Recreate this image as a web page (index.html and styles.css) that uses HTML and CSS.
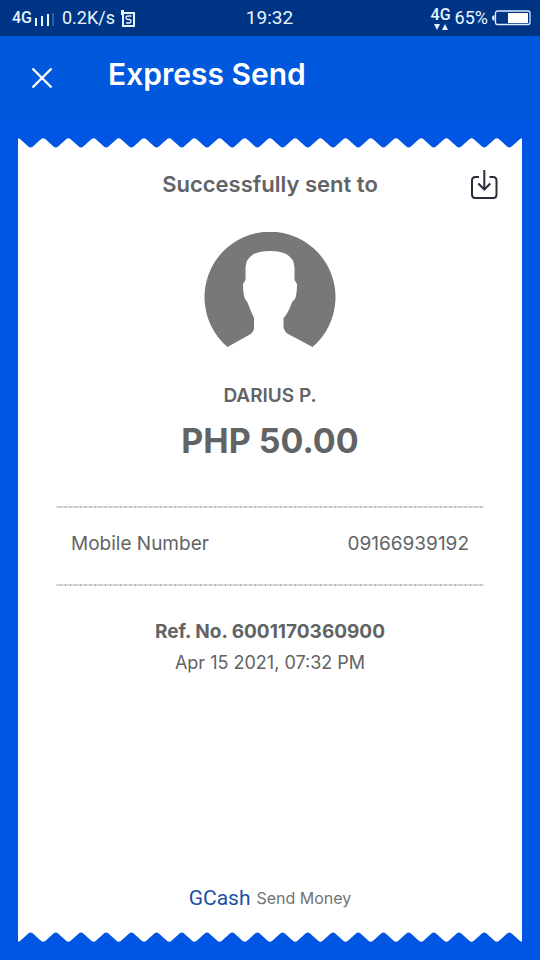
FILE: index.html
```
<!DOCTYPE html>
<html lang="en">
<head>
<meta charset="utf-8">
<meta name="viewport" content="width=device-width, initial-scale=1">
<title>Express Send</title>
<link rel="stylesheet" href="styles.css">
</head>
<body>
<div class="status">
  <div class="status-side">
    <span class="network">4G</span>
    <svg class="signal" width="20" height="16" viewBox="0 0 20 16" fill="#e8f6ff" aria-hidden="true"><path d="M1 8h2v8H1zM7 6h2v10H7zM13 4h2v12h-2z"/><path d="M18 3h2v13h-2z" fill="#2c5cae"/></svg>
    <span>0.2K/s</span>
    <svg width="16" height="18" viewBox="0 0 16 18" fill="none" stroke="#e8f6ff" stroke-width="2" aria-hidden="true"><path d="M2 4H13V17H2zM1 1V6M0 2H3"/><path d="M10.500 7H7Q5 7 5 8.700T7 10.500H8.500Q10 10.500 10 12.200T8.500 14H5" stroke-width="1.300"/></svg>
  </div>
  <time>19:32</time>
  <div class="status-side status-right">
    <div class="data">
      <span class="network">4G</span>
      <svg width="16" height="6" viewBox="0 0 16 6" fill="#e8f6ff" aria-hidden="true"><path d="M1 0h6l-3 6zM9 6h6l-3-6z"/></svg>
    </div>
    <span>65%</span>
    <svg width="39" height="16" viewBox="0 0 39 16" aria-hidden="true"><path d="M2.500 5Q0 5.500 0 8t2.500 3z" fill="#e8f6ff"/><rect x="3.500" y="1" width="34.500" height="13.500" rx="2" fill="none" stroke="#d9ebff" stroke-width="1.300"/><path d="M16 3h20v10H16z" fill="#fff"/></svg>
  </div>
</div>
<header class="bar">
  <button class="icon-button" aria-label="Close"><svg width="22" height="22" viewBox="0 0 22 22" fill="none" stroke="#fff" stroke-width="2.400"><path d="M1.500 1.500 20.500 20.500M20.500 1.500 1.500 20.500"/></svg></button>
  <h1>Express Send</h1>
</header>
<main class="receipt">
  <svg class="edge" viewBox="0 0 504 10" preserveAspectRatio="none" aria-hidden="true">
    <defs><path id="teeth" d="M0 10V.3q1.200 0 2.300 1l8.300 7.400q2 1.400 4 0l8.300-7.400q2.300-2 4.600 0l8.300 7.400q2 1.400 4 0l8.300-7.400q2.300-2 4.600 0l8.300 7.400q2 1.400 4 0l8.300-7.400q2.300-2 4.600 0l8.300 7.400q2 1.400 4 0l8.300-7.400q2.300-2 4.600 0l8.300 7.400q2 1.400 4 0l8.300-7.400q1.100-1 2.300-1V10z"/></defs>
    <g fill="#fff"><use href="#teeth"/><use href="#teeth" x="126"/><use href="#teeth" x="252"/><use href="#teeth" x="378"/></g>
  </svg>
  <div class="paper">
    <div class="sent">
      <h2>Successfully sent to</h2>
      <button class="icon-button" aria-label="Download receipt"><svg width="28" height="30" viewBox="0 0 28 30" fill="none" stroke="#2c2c3a" stroke-width="2"><path d="M9 8H5.500Q2 8 2 11.500V25.500Q2 29 5.500 29H23Q26.500 29 26.500 25.500V11.500Q26.500 8 23 8H19.500M14.300 1V20M8.300 14.500 14.300 20.500 20.300 14.500"/></svg></button>
    </div>
    <svg class="avatar" width="132" height="116" viewBox="0 0 132 116" role="img" aria-label="Recipient"><path fill="#777979" d="M23.500 115A65.500 65.500 0 1 1 108.500 115L86 103Q80 100 79.500 95V86Q83 83 87 73Q88 69 91 67Q93 62 93 52L90.500 48V36Q90 19 66 19T41.500 36V48L39 52Q39 62 41 67Q43 69 44.500 73Q48 82 50 86V96Q50 100 45 103Z"/></svg>
    <p class="name">DARIUS P.</p>
    <p class="amount">PHP 50.00</p>
    <dl class="details">
      <dt>Mobile Number</dt>
      <dd>09166939192</dd>
    </dl>
    <p class="reference">Ref. No. 6001170360900</p>
    <p class="date">Apr 15 2021, 07:32 PM</p>
    <footer><span class="brand">GCash</span><span>Send Money</span></footer>
  </div>
  <svg class="edge edge-bottom" viewBox="0 0 504 10" preserveAspectRatio="none" aria-hidden="true"><g fill="#fff"><use href="#teeth"/><use href="#teeth" x="126"/><use href="#teeth" x="252"/><use href="#teeth" x="378"/></g></svg>
</main>
</body>
</html>
```
FILE: styles.css
```
* {
  box-sizing: border-box;
}

body {
  margin: 0;
  min-height: 100vh;
  display: flex;
  flex-direction: column;
  background: #0056e3;
  color: #616365;
  font-family: Inter, Roboto, sans-serif;
}

h1, h2, p, dl, dd {
  margin: 0;
}

svg {
  display: block;
  flex: none;
}

.status {
  display: grid;
  grid-template-columns: 1fr auto 1fr;
  align-items: center;
  height: 36px;
  padding: 0 9px 0 12px;
  background: #003586;
  color: #e8f6ff;
  font: 18px/24px Roboto, sans-serif;
}

.status time {
  margin-right: 4px;
  font-size: 19px;
}

.network {
  font: 500 16px/18px Roboto, sans-serif;
}

.status-side {
  display: flex;
  align-items: center;
  gap: 6px;
}

.signal {
  margin: 0 2px 0 -4px;
}

.status-right {
  justify-content: flex-end;
  gap: 4px;
}

.data {
  display: flex;
  flex-direction: column;
  align-items: center;
}

.bar {
  display: flex;
  align-items: center;
  gap: 55px;
  height: 84px;
  padding: 0 31px;
  background: #0058dc;
  color: #fff;
}

.bar h1 {
  font-size: 30px;
  font-weight: 600;
  line-height: 36px;
  padding-bottom: 8px;
}

.icon-button {
  padding: 0;
  border: 0;
  background: none;
  cursor: pointer;
}

.receipt {
  flex: 1;
  display: flex;
  flex-direction: column;
  margin: 18px;
}

.edge {
  width: 100%;
  height: 10px;
}

.edge-bottom {
  transform: scaleY(-1);
}

.paper {
  flex: 1;
  display: flex;
  flex-direction: column;
  align-items: center;
  padding: 20px 24px;
  background: #fff;
  text-align: center;
}

.sent {
  display: grid;
  grid-template-columns: 28px 1fr 28px;
  align-self: stretch;
  align-items: center;
  height: 32px;
}

.sent h2 {
  grid-column: 2;
  font-size: 22px;
  line-height: 32px;
  font-weight: 600;
}

.avatar {
  margin: 32px 0;
}

.name {
  font-size: 19px;
  font-weight: 600;
  line-height: 32px;
}

.amount {
  margin-top: 4px;
  font-size: 34px;
  font-weight: 700;
  line-height: 50px;
}

.details {
  align-self: stretch;
  display: flex;
  justify-content: space-between;
  align-items: center;
  height: 80px;
  margin: 40px 14px 30px;
  padding: 0 15px 6px;
  background:
    repeating-linear-gradient(90deg, #d9dbdd 0 4px, #aeb1b3 4px 5px) top / 100% 2px no-repeat,
    repeating-linear-gradient(90deg, #d9dbdd 0 4px, #aeb1b3 4px 5px) bottom / 100% 2px no-repeat;
  font-size: 19px;
}

.reference {
  font-size: 19px;
  font-weight: 700;
  line-height: 32px;
}

.date {
  font-size: 18px;
  line-height: 30px;
}

footer {
  display: flex;
  align-items: center;
  gap: 6px;
  margin-top: auto;
  font-size: 16px;
  line-height: 28px;
}

footer span:last-child {
  color: #717375;
}

.brand {
  color: #1d4fa5;
  font: 21px/28px Roboto, sans-serif;
}
```
